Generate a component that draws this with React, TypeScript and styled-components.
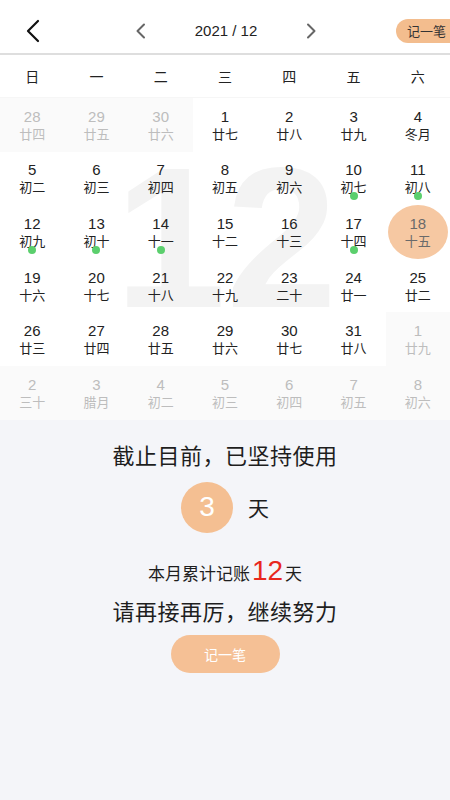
import styled, { createGlobalStyle } from "styled-components";

const GlobalStyle = createGlobalStyle`
  body {
    margin: 0;
    background: #f4f5f9;
    font-family: "Liberation Sans", "Noto Sans CJK SC", sans-serif;
  }
`;

interface Day {
  num: number;
  lunar: string;
  other?: boolean;
  dot?: boolean;
}

const weekNames = ["日", "一", "二", "三", "四", "五", "六"];

const days: Day[] = [
  { num: 28, lunar: "廿四", other: true },
  { num: 29, lunar: "廿五", other: true },
  { num: 30, lunar: "廿六", other: true },
  { num: 1, lunar: "廿七" },
  { num: 2, lunar: "廿八" },
  { num: 3, lunar: "廿九" },
  { num: 4, lunar: "冬月" },
  { num: 5, lunar: "初二" },
  { num: 6, lunar: "初三" },
  { num: 7, lunar: "初四" },
  { num: 8, lunar: "初五" },
  { num: 9, lunar: "初六" },
  { num: 10, lunar: "初七", dot: true },
  { num: 11, lunar: "初八", dot: true },
  { num: 12, lunar: "初九", dot: true },
  { num: 13, lunar: "初十", dot: true },
  { num: 14, lunar: "十一", dot: true },
  { num: 15, lunar: "十二" },
  { num: 16, lunar: "十三" },
  { num: 17, lunar: "十四", dot: true },
  { num: 18, lunar: "十五" },
  { num: 19, lunar: "十六" },
  { num: 20, lunar: "十七" },
  { num: 21, lunar: "十八" },
  { num: 22, lunar: "十九" },
  { num: 23, lunar: "二十" },
  { num: 24, lunar: "廿一" },
  { num: 25, lunar: "廿二" },
  { num: 26, lunar: "廿三" },
  { num: 27, lunar: "廿四" },
  { num: 28, lunar: "廿五" },
  { num: 29, lunar: "廿六" },
  { num: 30, lunar: "廿七" },
  { num: 31, lunar: "廿八" },
  { num: 1, lunar: "廿九", other: true },
  { num: 2, lunar: "三十", other: true },
  { num: 3, lunar: "腊月", other: true },
  { num: 4, lunar: "初二", other: true },
  { num: 5, lunar: "初三", other: true },
  { num: 6, lunar: "初四", other: true },
  { num: 7, lunar: "初五", other: true },
  { num: 8, lunar: "初六", other: true },
];

const selectedDay = 18;

export default function App() {
  return (
    <Page>
      <GlobalStyle />
      <Header>
        <BackButton>
          <svg width="16" height="24" viewBox="0 0 16 24">
            <path d="M13 2 L3 12 L13 22" fill="none" stroke="#111" strokeWidth="2.2" strokeLinecap="round" strokeLinejoin="round" />
          </svg>
        </BackButton>
        <MonthSwitch>
          <svg width="12" height="16" viewBox="0 0 12 16">
            <path d="M9 1.5 L2.5 8 L9 14.5" fill="none" stroke="#666" strokeWidth="2" strokeLinecap="round" strokeLinejoin="round" />
          </svg>
          <MonthTitle>2021 / 12</MonthTitle>
          <svg width="12" height="16" viewBox="0 0 12 16">
            <path d="M3 1.5 L9.5 8 L3 14.5" fill="none" stroke="#666" strokeWidth="2" strokeLinecap="round" strokeLinejoin="round" />
          </svg>
        </MonthSwitch>
        <Pill>记一笔</Pill>
      </Header>

      <WeekRow>
        {weekNames.map((w) => (
          <WeekName key={w}>{w}</WeekName>
        ))}
      </WeekRow>

      <Grid>
        <Watermark>12</Watermark>
        {days.map((d, i) => (
          <Cell key={i} $other={d.other}>
            <DayBox $selected={!d.other && d.num === selectedDay}>
              <DayNum>{d.num}</DayNum>
              <Lunar>{d.lunar}</Lunar>
              {d.dot && <Dot />}
            </DayBox>
          </Cell>
        ))}
      </Grid>

      <Summary>
        <BigLine>截止目前，已坚持使用</BigLine>
        <DaysRow>
          <Circle>3</Circle>
          <DayUnit>天</DayUnit>
        </DaysRow>
        <MonthLine>
          本月累计记账<Red>12</Red>天
        </MonthLine>
        <BigLine $gap={8}>请再接再厉，继续努力</BigLine>
        <RecordButton>记一笔</RecordButton>
      </Summary>
    </Page>
  );
}

const Page = styled.div`
  width: 450px;
  min-height: 800px;
  background: #f4f5f9;
  overflow: hidden;
`;

const Header = styled.div`
  height: 55px;
  box-sizing: border-box;
  padding-top: 8px;
  background: #fff;
  border-bottom: 2px solid #dedede;
  display: flex;
  align-items: center;
`;

const BackButton = styled.div`
  width: 135px;
  padding-left: 25px;
  box-sizing: border-box;
  display: flex;
  align-items: center;
`;

const MonthSwitch = styled.div`
  width: 182px;
  display: flex;
  align-items: center;
  justify-content: space-between;
`;

const MonthTitle = styled.div`
  font-size: 15px;
  color: #222;
`;

const Pill = styled.div`
  width: 66px;
  height: 24px;
  margin-left: auto;
  margin-right: -12px;
  border-radius: 12px;
  background: #f3bd8e;
  color: #333;
  font-size: 13px;
  display: flex;
  align-items: center;
  padding-left: 11px;
  box-sizing: border-box;
  font-family: "Noto Sans CJK SC", sans-serif;
`;

const WeekRow = styled.div`
  height: 42px;
  background: #fff;
  display: grid;
  grid-template-columns: repeat(7, 1fr);
  align-items: center;
  border-bottom: 1px solid #f6f6f6;
`;

const WeekName = styled.div`
  text-align: center;
  font-size: 14px;
  color: #222;
  font-family: "Noto Sans CJK SC", sans-serif;
`;

const Grid = styled.div`
  position: relative;
  background: #fff;
  display: grid;
  grid-template-columns: repeat(7, 1fr);
  grid-auto-rows: 53.6px;
`;

const Watermark = styled.div`
  position: absolute;
  left: 0;
  right: 0;
  top: 40px;
  text-align: center;
  font-size: 200px;
  line-height: 200px;
  font-weight: bold;
  color: #f3f3f3;
  font-family: "Liberation Sans", sans-serif;
  pointer-events: none;
  padding-left: 2px;
`;

const Cell = styled.div<{ $other?: boolean }>`
  position: relative;
  background: ${(p) => (p.$other ? "#fafafa" : "transparent")};
  color: ${(p) => (p.$other ? "#bdbdbd" : "#222")};
  display: flex;
  align-items: center;
  justify-content: center;
`;

const DayBox = styled.div<{ $selected?: boolean }>`
  position: relative;
  width: 60px;
  height: 54px;
  border-radius: 50%;
  background: ${(p) => (p.$selected ? "#f6c8a2" : "transparent")};
  color: ${(p) => (p.$selected ? "#6a6a6a" : "inherit")};
  display: flex;
  flex-direction: column;
  align-items: center;
  padding-top: 10px;
  box-sizing: border-box;
`;

const DayNum = styled.div`
  font-size: 15px;
  line-height: 17px;
`;

const Lunar = styled.div`
  font-size: 13px;
  line-height: 17px;
  font-family: "Noto Sans CJK SC", sans-serif;
`;

const Dot = styled.div`
  position: absolute;
  top: 41px;
  left: 50%;
  margin-left: -4px;
  width: 8px;
  height: 8px;
  border-radius: 50%;
  background: #5bcf6d;
`;

const Summary = styled.div`
  background: #f4f5f9;
  display: flex;
  flex-direction: column;
  align-items: center;
  padding-top: 20px;
  font-family: "Noto Sans CJK SC", sans-serif;
  color: #1e1e1e;
`;

const BigLine = styled.div<{ $gap?: number }>`
  margin-top: ${(p) => p.$gap ?? 0}px;
  font-size: 22px;
  line-height: 28px;
  letter-spacing: 0.5px;
`;

const DaysRow = styled.div`
  display: flex;
  align-items: center;
  gap: 15px;
  margin-top: 14px;
`;

const DayUnit = styled.span`
  font-size: 21px;
`;

const Circle = styled.div`
  width: 52px;
  height: 51px;
  border-radius: 50%;
  background: #f4bf92;
  color: #fff;
  font-size: 28px;
  font-family: "Liberation Sans", sans-serif;
  display: flex;
  align-items: center;
  justify-content: center;
`;

const MonthLine = styled.div`
  margin-top: 21px;
  font-size: 17px;
  line-height: 34px;
  height: 34px;
  display: flex;
  align-items: baseline;
`;

const Red = styled.span`
  font-size: 28px;
  color: #e8271d;
  font-family: "Liberation Sans", sans-serif;
  margin: 0 2px;
`;

const RecordButton = styled.div`
  margin-top: 11px;
  width: 109px;
  height: 38px;
  border-radius: 19px;
  background: #f5c095;
  color: #fff;
  font-size: 14px;
  display: flex;
  align-items: center;
  justify-content: center;
`;
